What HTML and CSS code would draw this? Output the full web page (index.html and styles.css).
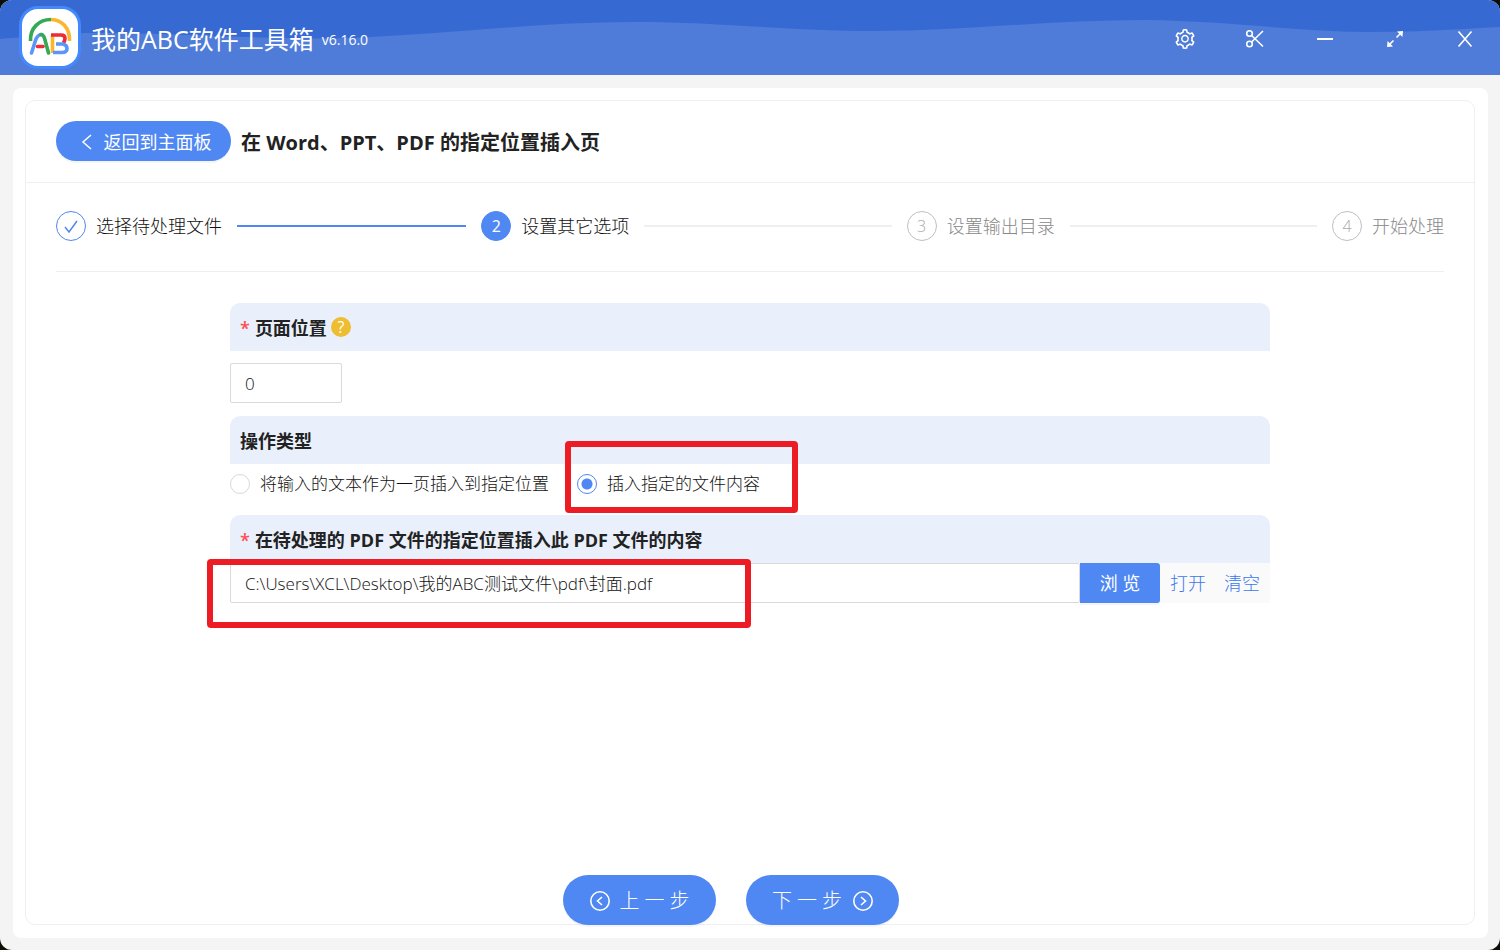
FILE: index.html
```html
<!DOCTYPE html>
<html lang="zh-CN">
<head>
    <meta charset="UTF-8">
    <title>我的ABC软件工具箱</title>
    <link rel="stylesheet" href="styles.css">
</head>
<body>
    <div id="app">
        <!-- 标题栏 -->
        <header class="titlebar">
            <svg class="wave" viewBox="0 0 1500 75" preserveAspectRatio="none" aria-hidden="true">
                <path d="M0 39C30 37 70 32 110 33C200 34 270 40 350 38C450 34 540 22 634 22C720 22 790 31 874 31C960 31 1050 20 1145 20C1230 21 1300 32 1373 32C1420 32 1460 29 1500 27V75H0Z"/>
            </svg>
            <svg class="logo" viewBox="0 0 62 64" aria-hidden="true">
                <rect x="0" y="0" width="62" height="63" rx="19" fill="#4389fd"/>
                <rect x="3" y="3" width="56" height="57" rx="16" fill="#fff"/>
                <g fill="none" stroke-width="3.6">
                    <path d="M11.500 35C11 22 20 13.500 32 13.500" stroke="#34a853"/>
                    <path d="M32 13.500C43 14 51 22 50.500 35" stroke="#fbb62d"/>
                    <path d="M12.500 47L17 33Q19 28.500 23 28.500" stroke="#5b95fa" stroke-linecap="round"/>
                    <path d="M22 28.500Q25 29 26 34L29.500 47" stroke="#34a853" stroke-linecap="round"/>
                    <path d="M18.500 40.500H24" stroke="#ee2a35" stroke-linecap="round"/>
                    <path d="M33.500 29V47" stroke="#fbb62d"/>
                    <path d="M32 29H42Q46 29 46 32.500Q46 35.500 44 37" stroke="#ee2a35"/>
                    <path d="M37 38H44Q48 39 48 42.500Q48 46.500 43 46.500H34" stroke="#5b95fa"/>
                </g>
            </svg>
            <h1>我的ABC软件工具箱</h1>
            <span class="version">v6.16.0</span>
            <nav class="tools">
                <button type="button" aria-label="设置">
                    <svg viewBox="64 64 896 896"><path fill="currentColor" d="M924.8 625.700l-65.500-56c3.100-19 4.700-38.400 4.700-57.800s-1.600-38.800-4.700-57.800l65.500-56a32.030 32.030 0 0 0 9.300-35.200l-.9-2.600a443.740 443.740 0 0 0-79.700-137.900l-1.800-2.100a32.120 32.120 0 0 0-35.100-9.500l-81.300 28.900c-30-24.600-63.500-44-99.700-57.600l-15.700-85a32.050 32.050 0 0 0-25.800-25.700l-2.700-.5c-52.100-9.400-106.900-9.400-159 0l-2.700.5a32.050 32.050 0 0 0-25.800 25.700l-15.800 85.400a351.860 351.860 0 0 0-99 57.400l-81.900-29.100a32 32 0 0 0-35.100 9.500l-1.800 2.100a446.020 446.020 0 0 0-79.700 137.900l-.9 2.600c-4.500 12.500-.8 26.500 9.300 35.200l66.300 56.600c-3.100 18.800-4.600 38-4.600 57.100 0 19.200 1.500 38.400 4.600 57.100L99 625.500a32.030 32.030 0 0 0-9.300 35.200l.9 2.600c18.100 50.400 44.900 96.900 79.700 137.900l1.800 2.100a32.120 32.120 0 0 0 35.100 9.500l81.900-29.100c29.800 24.500 63.100 43.900 99 57.400l15.800 85.400a32.050 32.050 0 0 0 25.800 25.700l2.700.5a449.400 449.400 0 0 0 159 0l2.700-.5a32.050 32.050 0 0 0 25.800-25.700l15.700-85a350 350 0 0 0 99.700-57.600l81.300 28.900a32 32 0 0 0 35.100-9.500l1.800-2.100c34.800-41.100 61.600-87.500 79.700-137.900l.9-2.600c4.500-12.300.8-26.300-9.300-35zM788.300 465.900c2.500 15.100 3.800 30.600 3.800 46.100s-1.300 31-3.800 46.100l-6.600 40.100 74.700 63.900a370.030 370.030 0 0 1-42.600 73.600L721 702.800l-31.400 25.800c-23.900 19.600-50.500 35-79.300 45.800l-38.100 14.300-17.900 97a377.500 377.500 0 0 1-85 0l-17.900-97.200-37.800-14.500c-28.500-10.800-55-26.200-78.700-45.700l-31.400-25.900-93.400 33.200c-17-22.900-31.200-47.600-42.600-73.600l75.500-64.500-6.500-40c-2.400-14.900-3.700-30.300-3.700-45.500 0-15.300 1.200-30.600 3.700-45.500l6.500-40-75.500-64.500c11.300-26.100 25.600-50.700 42.600-73.600l93.400 33.200 31.400-25.900c23.700-19.500 50.200-34.900 78.700-45.700l37.900-14.300 17.900-97.200c28.100-3.200 56.800-3.200 85 0l17.900 97 38.100 14.300c28.700 10.800 55.400 26.200 79.300 45.800l31.400 25.800 92.800-32.900c17 22.900 31.200 47.600 42.600 73.600L781.800 426l6.500 39.900zM512 326c-97.200 0-176 78.800-176 176s78.800 176 176 176 176-78.800 176-176-78.800-176-176-176zm79.200 255.200A111.600 111.600 0 0 1 512 614c-29.900 0-58-11.700-79.200-32.800A111.600 111.600 0 0 1 400 502c0-29.900 11.700-58 32.800-79.200C454 401.600 482.100 390 512 390c29.900 0 58 11.600 79.200 32.800A111.600 111.600 0 0 1 624 502c0 29.900-11.700 58-32.800 79.200z"/></svg>
                </button>
                <button type="button" aria-label="截图">
                    <svg viewBox="0 0 20 20" fill="none" stroke="currentColor" stroke-width="1.6"><circle cx="4.500" cy="4.500" r="2.800"/><circle cx="4.500" cy="15" r="2.800"/><path d="M6.600 6.500L18 17.500M6.600 13L18 2"/></svg>
                </button>
                <button type="button" aria-label="最小化">
                    <svg viewBox="0 0 20 20" fill="none" stroke="currentColor" stroke-width="2"><path d="M2 10H18"/></svg>
                </button>
                <button type="button" aria-label="最大化">
                    <svg viewBox="0 0 20 20" fill="none" stroke="currentColor" stroke-width="1.6"><path d="M11.500 8.500L15.500 4.500M8.500 11.500L4.500 15.500"/><path fill="currentColor" stroke="none" d="M18 2L17.400 8L12 2.600ZM2 18L2.600 12L8 17.400Z"/></svg>
                </button>
                <button type="button" aria-label="关闭">
                    <svg viewBox="0 0 20 20" fill="none" stroke="currentColor" stroke-width="1.600"><path d="M3.500 2.500L16.500 17.500M16.500 2.500L3.500 17.500"/></svg>
                </button>
            </nav>
        </header>

        <main class="panel">
            <div class="card">
                <div class="card-head">
                    <button type="button" class="btn back">
                        <svg viewBox="0 0 18 18" fill="none" stroke="currentColor" stroke-width="1.500"><path d="M13 2L5 9L13 16"/></svg>
                        返回到主面板
                    </button>
                    <h2>在 Word、PPT、PDF 的指定位置插入页</h2>
                </div>

                <!-- 步骤条 -->
                <ol class="steps">
                    <li class="done">
                        <span class="num"><svg viewBox="0 0 18 18" fill="none" stroke="currentColor" stroke-width="1.500"><path d="M3 10L7 15L15 4"/></svg></span>
                        <span>选择待处理文件</span>
                    </li>
                    <li class="active"><span class="num">2</span><span>设置其它选项</span></li>
                    <li><span class="num">3</span><span>设置输出目录</span></li>
                    <li><span class="num">4</span><span>开始处理</span></li>
                </ol>

                <!-- 选项表单 -->
                <form class="options">
                    <div class="field">
                        <div class="label">
                            <i>*</i><label for="pos">页面位置</label><span class="help">?</span>
                        </div>
                        <input id="pos" class="text small" type="text" value="0">
                    </div>
                    <fieldset class="field">
                        <legend class="label">操作类型</legend>
                        <div class="radios">
                            <label><input type="radio" name="type">将输入的文本作为一页插入到指定位置</label>
                            <label class="mark mark-type"><input type="radio" name="type" checked>插入指定的文件内容</label>
                        </div>
                    </fieldset>
                    <div class="field">
                        <div class="label">
                            <i>*</i><label for="file">在待处理的 PDF 文件的指定位置插入此 PDF 文件的内容</label>
                        </div>
                        <div class="file mark mark-file">
                            <input id="file" class="text" type="text" value="C:\Users\XCL\Desktop\我的ABC测试文件\pdf\封面.pdf">
                            <button type="button" class="btn browse">浏 览</button>
                            <div class="addon">
                                <a href="#">打开</a>
                                <a href="#">清空</a>
                            </div>
                        </div>
                    </div>
                </form>

                <div class="footer">
                    <button type="button" class="btn step">
                        <svg viewBox="0 0 20 20" fill="none" stroke="currentColor" stroke-width="1.600"><circle cx="10" cy="10" r="9.200"/><path d="M12 6L7.500 10L12 14"/></svg>
                        <span>上一步</span>
                    </button>
                    <button type="button" class="btn step">
                        <span>下一步</span>
                        <svg viewBox="0 0 20 20" fill="none" stroke="currentColor" stroke-width="1.600"><circle cx="10" cy="10" r="9.200"/><path d="M8 6L12.500 10L8 14"/></svg>
                    </button>
                </div>
            </div>
        </main>
    </div>
</body>
</html>
```
FILE: styles.css
```css
*,*::after{margin:0; padding:0; box-sizing:border-box;}
body{background:#0b1006; color:#111;
    font:300 18px/24px "Open Sans","Noto Sans CJK SC",sans-serif;
}
button,input{font:inherit; color:inherit;}
button{border:0; background:none; cursor:pointer;}
a{color:#3a78f0; text-decoration:none;}
ol{list-style:none;}
#app{min-height:100vh; display:flex; flex-direction:column;
    background:#f4f4f4; border-radius:12px; overflow:hidden;
}

/* 标题栏 */
.titlebar{position:relative; height:75px; display:flex; align-items:center;
    padding-left:19px; background:#3769d3; color:#fff;
}
.titlebar>*{position:relative;}
.titlebar .wave{position:absolute; left:0; top:0; width:100%; height:100%;}
.wave path{fill:#4f7cd8;}
.logo{width:62px; height:64px;}
.titlebar h1{margin:2px 8px 0 10px; font-size:25px; line-height:32px; font-weight:400;}
.version{margin-top:4px; font-size:14px; font-weight:400;}
.tools{margin-left:auto; display:flex; padding-top:3px;}
.tools button{width:70px; height:40px; display:flex; align-items:center; justify-content:center;}
.tools svg{width:20px; height:20px;}

.panel{flex:1; display:flex; margin:13px 12px 12px 13px; padding:12px 13px 13px 12px;
    background:#fff; border-radius:8px;
}
.card{flex:1; display:flex; flex-direction:column;
    border:1px solid #efefef; border-radius:10px;
}
.card-head{display:flex; align-items:center; gap:10px; padding:20px 30px 21px;
    border-bottom:1px solid #efefef;
}
.card-head h2{padding-top:4px; font-size:20px; font-weight:700; line-height:28px; color:#222;}

.btn{display:flex; align-items:center; justify-content:center;
    background:#4f87f3; color:#fff; box-shadow:0 2px 0 rgba(0,0,0,.04); white-space:nowrap;
}
.back{width:175px; height:40px; padding:2px 0 0 2px; border-radius:20px; gap:8px; font-weight:400;}
.back svg{width:18px; height:18px;}

/* 步骤条 */
.steps{display:flex; margin:0 30px; padding:28px 0 30px; border-bottom:1px solid #efefef;}
.steps li{flex:1; display:flex; align-items:center; gap:10px; color:#888;}
.steps li:last-child{flex:none;}
.steps li:not(:last-child)::after{content:""; flex:1; height:2px; margin:0 15px 0 5px; background:#efefef;}
.num{width:30px; height:30px; display:flex; align-items:center; justify-content:center;
    border:1px solid #bfbfbf; border-radius:50%; font-size:16px; color:#aaa;
}
.num svg{width:18px; height:18px;}
.steps .done,.steps .active{color:#111;}
.done .num{border-color:#4f87f3; color:#4f87f3;}
.steps .done::after{background:#4f87f3 !important;}
.active .num{border-color:#4f87f3; background:#4f87f3; color:#fff; font-weight:400;}

/* 表单 */
.options{width:100%; max-width:1040px; margin:31px auto 0;}
.field{border:0; margin-bottom:13px;}
.label{display:flex; align-items:center; width:100%; height:48px; padding:2px 10px 0;
    background:#e9f0fc; border-radius:10px 10px 0 0; font-size:18px; font-weight:700; color:#222;
}
.label i{margin-right:5px; font-style:normal; font-weight:600; color:#ff4d4f;}
.help{width:20px; height:20px; margin:0 0 3px 4px; border-radius:50%; background:#efbd30;
    color:#fff; font-size:16px; line-height:20px; font-weight:400; text-align:center;
}
.text{height:40px; padding:0 14px; border:1px solid #d9d9d9; border-radius:2px;
    background:#fff; font-size:17px;
}
.small{display:block; width:112px; margin-top:12px;}
.radios{display:flex; gap:28px; padding:8px 0 6px; font-size:17px;}
.radios label{display:flex; align-items:center; gap:10px;}
input[type=radio]{appearance:none; width:20px; height:20px;
    border:1px solid #d9d9d9; border-radius:50%; background:#fff;
}
input[type=radio]:checked{border-color:#4f87f3;
    background:radial-gradient(circle,#4f87f3 5px,#fff 6px);
}
.file{display:flex;}
.file .text{flex:1; min-width:0; padding-bottom:2px;}
.browse{width:80px; height:40px; border-radius:0 3px 3px 0; font-weight:400;}
.addon{display:flex; align-items:center; gap:18px; padding:0 10px; background:#fafafa;}

/* 红色标注框 */
.mark{position:relative;}
.mark::after{content:""; position:absolute; border:6px solid #ed1c24; border-radius:4px; pointer-events:none;}
.mark-type::after{left:-12px; right:-38px; top:-31px; height:72px;}
.mark-file::after{left:-23px; width:544px; top:-4px; height:69px;}

.footer{display:flex; justify-content:center; gap:30px; margin:auto 0 -1px; padding-right:38px;}
.step{width:153px; height:50px; padding-top:2px; border-radius:25px; font-size:20px; gap:10px;}
.step span{letter-spacing:5px; margin-right:-5px;}
.step svg{width:20px; height:20px;}
.step span+svg{margin-left:1px;}
```
